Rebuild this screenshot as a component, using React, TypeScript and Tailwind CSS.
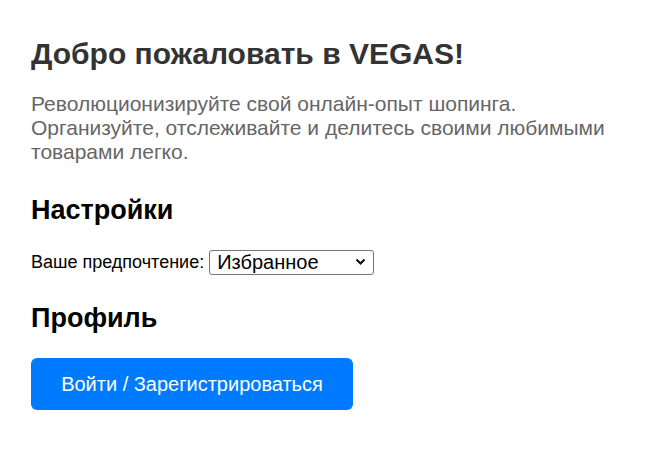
export default function App() {
  return (
    <div className="min-h-[449px] bg-white px-[31px] pt-[34px] font-['Liberation_Sans',Arial,sans-serif]">
      <h1 className="text-[30px] font-bold leading-[40px] text-[#333]">Добро пожаловать в VEGAS!</h1>
      <p className="mt-[18px] max-w-[585px] text-[21px] leading-[24px] text-[#666]">
        Революционизируйте свой онлайн-опыт шопинга. Организуйте, отслеживайте и делитесь своими любимыми товарами легко.
      </p>

      <h2 className="mt-[30px] text-[27px] font-bold leading-[32px] text-black">Настройки</h2>
      <div className="mt-[23px] flex items-center text-[18px] text-black">
        <label htmlFor="pref">Ваше предпочтение:</label>
        <div className="relative ml-[5px]">
          <select
            id="pref"
            defaultValue="fav"
            className="block h-[25px] w-[165px] appearance-none rounded-[3px] border border-[#767676] bg-white pl-[7px] text-[20px] leading-[23px] text-black"
          >
            <option value="fav">Избранное</option>
            <option value="all">Все</option>
          </select>
          <svg
            className="pointer-events-none absolute right-[8px] top-[8px]"
            width="11"
            height="8"
            viewBox="0 0 11 8"
            fill="none"
          >
            <path d="M1.5 1.5 L5.5 5.5 L9.5 1.5" stroke="#111" strokeWidth="2.2" />
          </svg>
        </div>
      </div>

      <h2 className="mt-[26px] text-[27px] font-bold leading-[32px] text-black">Профиль</h2>
      <button className="mt-[24px] h-[52px] w-[322px] rounded-[6px] bg-[#007bff] text-[20px] text-white">
        Войти / Зарегистрироваться
      </button>
    </div>
  )
}
